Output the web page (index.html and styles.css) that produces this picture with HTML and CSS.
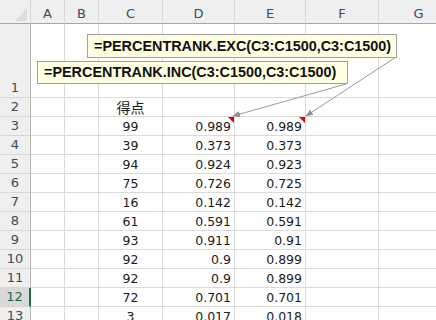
FILE: index.html
```html
<!DOCTYPE html>
<html lang="ja">
<head>
<meta charset="utf-8">
<link rel="stylesheet" href="styles.css">
</head>
<body>
<div class="sheet">
  <div class="grid">
    <div class="corner"></div>
    <div class="colhdr">A</div><div class="colhdr">B</div><div class="colhdr">C</div><div class="colhdr">D</div><div class="colhdr">E</div><div class="colhdr">F</div><div class="colhdr">G</div>

    <div class="rowhdr tall">1</div><div class="cell"></div><div class="cell"></div><div class="cell"></div><div class="cell"></div><div class="cell"></div><div class="cell"></div><div class="cell"></div>

    <div class="rowhdr">2</div><div class="cell"></div><div class="cell"></div><div class="cell center jp">得点</div><div class="cell"></div><div class="cell"></div><div class="cell"></div><div class="cell"></div>

    <div class="rowhdr">3</div><div class="cell"></div><div class="cell"></div><div class="cell center">99</div><div class="cell num note">0.989</div><div class="cell num note">0.989</div><div class="cell"></div><div class="cell"></div>

    <div class="rowhdr">4</div><div class="cell"></div><div class="cell"></div><div class="cell center">39</div><div class="cell num">0.373</div><div class="cell num">0.373</div><div class="cell"></div><div class="cell"></div>

    <div class="rowhdr">5</div><div class="cell"></div><div class="cell"></div><div class="cell center">94</div><div class="cell num">0.924</div><div class="cell num">0.923</div><div class="cell"></div><div class="cell"></div>

    <div class="rowhdr">6</div><div class="cell"></div><div class="cell"></div><div class="cell center">75</div><div class="cell num">0.726</div><div class="cell num">0.725</div><div class="cell"></div><div class="cell"></div>

    <div class="rowhdr">7</div><div class="cell"></div><div class="cell"></div><div class="cell center">16</div><div class="cell num">0.142</div><div class="cell num">0.142</div><div class="cell"></div><div class="cell"></div>

    <div class="rowhdr">8</div><div class="cell"></div><div class="cell"></div><div class="cell center">61</div><div class="cell num">0.591</div><div class="cell num">0.591</div><div class="cell"></div><div class="cell"></div>

    <div class="rowhdr">9</div><div class="cell"></div><div class="cell"></div><div class="cell center">93</div><div class="cell num">0.911</div><div class="cell num">0.91</div><div class="cell"></div><div class="cell"></div>

    <div class="rowhdr">10</div><div class="cell"></div><div class="cell"></div><div class="cell center">92</div><div class="cell num">0.9</div><div class="cell num">0.899</div><div class="cell"></div><div class="cell"></div>

    <div class="rowhdr">11</div><div class="cell"></div><div class="cell"></div><div class="cell center">92</div><div class="cell num">0.9</div><div class="cell num">0.899</div><div class="cell"></div><div class="cell"></div>

    <div class="rowhdr selected">12</div><div class="cell"></div><div class="cell"></div><div class="cell center">72</div><div class="cell num">0.701</div><div class="cell num">0.701</div><div class="cell"></div><div class="cell"></div>

    <div class="rowhdr">13</div><div class="cell"></div><div class="cell"></div><div class="cell center">3</div><div class="cell num">0.017</div><div class="cell num">0.018</div><div class="cell"></div><div class="cell"></div>
  </div>

  <svg class="arrows" width="436" height="320" viewBox="0 0 436 320">
    <defs>
      <marker id="ah" markerWidth="8" markerHeight="6" refX="7" refY="3" orient="auto" markerUnits="userSpaceOnUse">
        <path d="M0,0 L8,3 L0,6 Z" fill="#8f8f8f"/>
      </marker>
    </defs>
    <line x1="396" y1="57" x2="306" y2="116" stroke="#9a9a9a" stroke-width="1" marker-end="url(#ah)"/>
    <line x1="346" y1="84" x2="233" y2="116" stroke="#9a9a9a" stroke-width="1" marker-end="url(#ah)"/>
  </svg>

  <div class="callout exc">=PERCENTRANK.EXC(C3:C1500,C3:C1500)</div>
  <div class="callout inc">=PERCENTRANK.INC(C3:C1500,C3:C1500)</div>
</div>
</body>
</html>
```
FILE: styles.css
```css
html, body {
  margin: 0;
  padding: 0;
  background: #ffffff;
  overflow: hidden;
}

.sheet {
  position: relative;
  width: 436px;
  height: 320px;
  overflow: hidden;
  font-family: "DejaVu Sans", "Noto Sans CJK JP", sans-serif;
}

.grid {
  display: grid;
  grid-template-columns: 31px 34px 34px 64px 72px 71px 73px 80px;
  grid-template-rows: 24px 74px repeat(12, 19px);
}

.corner {
  position: relative;
  background: #efefef;
  border-right: 1px solid #d6d6d6;
  border-bottom: 1px solid #a6a6a6;
  box-sizing: border-box;
}

.corner::after {
  content: "";
  position: absolute;
  right: 3px;
  bottom: 2px;
  width: 0;
  height: 0;
  border-left: 12px solid transparent;
  border-bottom: 13px solid #dcdcdc;
}

.colhdr {
  background: #efefef;
  color: #3c4a5a;
  font-size: 13px;
  text-align: center;
  line-height: 23px;
  padding-top: 2px;
  box-sizing: border-box;
  border-right: 1px solid #d6d6d6;
  border-bottom: 1px solid #a6a6a6;
}

.rowhdr {
  background: #efefef;
  color: #3c4a5a;
  font-size: 13px;
  text-align: center;
  line-height: 18px;
  box-sizing: border-box;
  border-right: 1px solid #b4b4b4;
  border-bottom: 1px solid #d6d6d6;
}

.rowhdr.tall {
  display: flex;
  align-items: flex-end;
  justify-content: center;
}

.rowhdr.selected {
  background: #d9d9d9;
  color: #1d6b45;
  border-right: 2px solid #217346;
}

.cell {
  position: relative;
  box-sizing: border-box;
  border-right: 1px solid #dadada;
  border-bottom: 1px solid #dadada;
  font-size: 12.5px;
  line-height: 19px;
  color: #1a1a1a;
  white-space: nowrap;
}

.center {
  text-align: center;
}

.num {
  text-align: right;
  padding-right: 3px;
}

.jp {
  font-family: "Noto Sans CJK JP", sans-serif;
  font-size: 14px;
  line-height: 18px;
}

.note::after {
  content: "";
  position: absolute;
  top: 0;
  right: 0;
  width: 0;
  height: 0;
  border-left: 6px solid transparent;
  border-top: 6px solid #e00000;
}

.arrows {
  position: absolute;
  left: 0;
  top: 0;
}

.callout {
  position: absolute;
  box-sizing: border-box;
  background: #ffffe1;
  border: 1px solid #a0a0a0;
  font-family: "Liberation Sans", Arial, sans-serif;
  font-weight: bold;
  font-size: 14.4px;
  color: #111;
  white-space: nowrap;
  padding-left: 6px;
}

.callout.exc {
  left: 87px;
  top: 34px;
  width: 310px;
  height: 24px;
  line-height: 22px;
}

.callout.inc {
  left: 37px;
  top: 61px;
  width: 311px;
  height: 23px;
  line-height: 21px;
}
```
